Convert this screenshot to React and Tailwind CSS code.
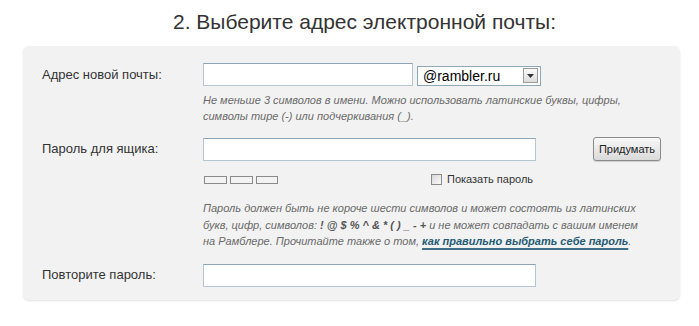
import React from "react";

const TextInput = ({ w }) => (
    <div className={`${w} h-[23px] bg-white border border-[#b3c6d2] border-t-[#8aa5b8]`}></div>
);

const RamblerSelect = () => (
    <div className="w-[124px] h-[20px] bg-white border border-[#8fa8b8] flex items-center justify-between pl-[5px] pr-[2px]">
        <span className="text-[14px] leading-none text-black">@rambler.ru</span>
        <div className="w-[15px] h-[15px] border border-[#9a9a9a] bg-gradient-to-b from-[#fbfbfb] to-[#dcdcdc] flex items-center justify-center">
            <svg width="7" height="4" viewBox="0 0 7 4"><path d="M0 0h7L3.5 4z" fill="#333" /></svg>
        </div>
    </div>
);

const App = () => {
    return (
        <div className="w-[699px] h-[326px] bg-white overflow-hidden" style={{ fontFamily: '"Liberation Sans", Arial, sans-serif' }}>
            {/* Title */}
            <div className="h-[46px] flex items-center justify-center pb-[4px] pl-[30px]">
                <h2 className="text-[21px] text-[#333] font-normal leading-none">2. Выберите адрес электронной почты:</h2>
            </div>

            {/* Form panel */}
            <div className="ml-[23px] w-[657px] bg-[#f2f2f2] rounded-[6px] shadow-[0_1px_2px_rgba(0,0,0,0.12)] pl-[19px] pt-[17px] pb-[13px]">
                {/* Email */}
                <div className="flex items-center">
                    <div className="w-[161px] text-[13px] text-[#333]">Адрес новой почты:</div>
                    <TextInput w="w-[210px]" />
                    <div className="ml-[4px] mt-[2px]"><RamblerSelect /></div>
                </div>
                <p className="ml-[161px] mt-[6px] text-[11px] leading-[16px] italic text-[#6a6a6a]">
                    Не меньше 3 символов в имени. Можно использовать латинские буквы, цифры,<br />
                    символы тире (-) или подчеркивания (_).
                </p>

                {/* Password */}
                <div className="flex items-center mt-[13px]">
                    <div className="w-[161px] text-[13px] text-[#333]">Пароль для ящика:</div>
                    <TextInput w="w-[333px]" />
                    <button className="ml-[57px] w-[68px] h-[24px] rounded-[3px] border border-[#8c8c8c] bg-gradient-to-b from-[#f8f8f8] to-[#dadada] text-[11px] text-[#222] shadow-[0_1px_1px_rgba(0,0,0,0.15)]">Придумать</button>
                </div>
                <div className="ml-[161px] mt-[12px] flex items-center h-[13px]">
                    <div className="flex gap-[3px] ml-[1px]">
                        <div className="w-[23px] h-[8px] border border-[#8a8a8a]"></div>
                        <div className="w-[23px] h-[8px] border border-[#8a8a8a]"></div>
                        <div className="w-[22px] h-[8px] border border-[#8a8a8a]"></div>
                    </div>
                    <div className="ml-[153px] flex items-center gap-[5px]">
                        <div className="w-[11px] h-[11px] border border-[#8a8a8a] bg-gradient-to-br from-[#d8d8d8] to-[#fafafa]"></div>
                        <span className="text-[11px] text-[#333]">Показать пароль</span>
                    </div>
                </div>
                <p className="ml-[161px] mt-[14px] text-[11px] leading-[16.5px] italic text-[#6a6a6a]">
                    Пароль должен быть не короче шести символов и может состоять из латинских<br />
                    букв, цифр, символов: <b className="text-[#555]">! @ $ % ^ &amp; * ( ) _ - +</b> и не может совпадать с вашим именем<br />
                    на Рамблере. Прочитайте также о том, <a href="#" className="text-[#245a74] font-bold underline decoration-[#3f6f88] decoration-[2px] underline-offset-[3px]">как правильно выбрать себе пароль</a>.
                </p>

                {/* Repeat */}
                <div className="flex items-center mt-[14px]">
                    <div className="w-[161px] text-[13px] text-[#333]">Повторите пароль:</div>
                    <TextInput w="w-[333px]" />
                </div>
            </div>
        </div>
    );
};

export default App;
